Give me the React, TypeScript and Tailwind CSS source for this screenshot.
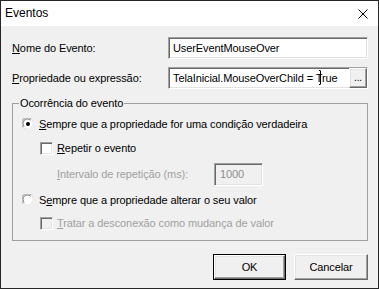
const sunken =
  'border border-t-[#a0a0a0] border-l-[#a0a0a0] border-r-white border-b-white shadow-[inset_1px_1px_0_#696969,inset_-1px_-1px_0_#e3e3e3]'
const raised =
  'border border-t-white border-l-white border-r-[#696969] border-b-[#696969] shadow-[inset_-1px_-1px_0_#a0a0a0,inset_1px_1px_0_#e3e3e3]'

function Radio({ checked }: { checked?: boolean }) {
  return (
    <svg width="12" height="12" viewBox="0 0 12 12" className="shrink-0">
      <circle cx="6" cy="6" r="5.5" fill="#fff" />
      <path d="M1.1 9.5A5.5 5.5 0 0 1 9.5 1.1" fill="none" stroke="#a0a0a0" strokeWidth="1" />
      <path d="M9.5 1.1A5.5 5.5 0 0 1 1.1 9.5" fill="none" stroke="#e3e3e3" strokeWidth="1" />
      <path d="M2.2 8.6A4.5 4.5 0 0 1 8.6 2.2" fill="none" stroke="#696969" strokeWidth="1" />
      {checked && <circle cx="6" cy="6" r="2" fill="#000" />}
    </svg>
  )
}

function Check({ disabled }: { disabled?: boolean }) {
  return <div className={`w-[13px] h-[13px] shrink-0 ${sunken} ${disabled ? 'bg-[#f0f0f0]' : 'bg-white'}`} />
}

export default function App() {
  return (
    <div className="w-[379px] h-[289px] border border-[#262626] bg-[#f0f0f0] flex flex-col font-['Liberation_Sans',Arial,sans-serif] text-[11px] leading-[13px] tracking-[-0.1px] text-black select-none">
      {/* title bar */}
      <div className="h-[25px] shrink-0 bg-white flex items-center justify-between pl-[4px] pr-[10px]">
        <span className="text-[12px] tracking-normal">Eventos</span>
        <svg width="10" height="10" viewBox="0 0 10 10">
          <path d="M0.5 0.5L9.5 9.5M9.5 0.5L0.5 9.5" stroke="#000" strokeWidth="1" />
        </svg>
      </div>

      <div className="flex-1 flex flex-col pl-[11px] pr-[10px] pt-[11px]">
        <div className="flex items-center h-[22px]">
          <span className="flex-1">
            <u>N</u>ome do Evento:
          </span>
          <div className={`w-[200px] h-[22px] bg-white pl-[4px] flex items-center ${sunken}`}>UserEventMouseOver</div>
        </div>

        <div className="flex items-center h-[22px] mt-[8px]">
          <span className="flex-1">
            <u>P</u>ropriedade ou expressão:
          </span>
          <div className={`relative w-[200px] h-[22px] bg-white pl-[4px] flex items-center ${sunken}`}>
            <span className="flex-1">TelaInicial.MouseOverChild = True</span>
            <div
              className={`w-[18px] h-[20px] bg-[#f0f0f0] flex items-end justify-center pb-[4px] text-[10px] leading-[10px] ${raised}`}
            >
              ...
            </div>
            {/* mouse I-beam */}
            <svg width="4" height="15" viewBox="0 0 4 15" className="absolute left-[150px] top-[2px]">
              <path d="M1.5 0.5V14.5M0 0.5H1M0 14.5H1" fill="none" stroke="#000" strokeWidth="1" />
            </svg>
          </div>
        </div>

        <fieldset className="mt-[8px] border border-[#a0a0a0] px-[9px] pt-[4px] pb-[7px] min-w-0">
          <legend className="-ml-[3px] px-[1px] leading-[13px]">Ocorrência do evento</legend>

          <div className="flex items-center h-[20px] gap-[5px]">
            <Radio checked />
            <span>
              <u>S</u>empre que a propriedade for uma condição verdadeira
            </span>
          </div>

          <div className="flex items-center h-[20px] mt-[4px] pl-[18px] gap-[4px]">
            <Check />
            <span>
              <u>R</u>epetir o evento
            </span>
          </div>

          <div className="flex items-center h-[23px] mt-[5px] pl-[35px]">
            <span className="w-[157px] text-[#a0a0a0]">
              <u>I</u>ntervalo de repetição (ms):
            </span>
            <div className={`w-[49px] h-[23px] bg-[#f0f0f0] pl-[5px] flex items-center text-[#8c8c8c] ${sunken}`}>1000</div>
          </div>

          <div className="flex items-center h-[20px] mt-[4px] gap-[5px]">
            <Radio />
            <span>
              S<u>e</u>mpre que a propriedade alterar o seu valor
            </span>
          </div>

          <div className="flex items-center h-[20px] mt-[3px] pl-[18px] gap-[4px]">
            <Check disabled />
            <span className="text-[#a0a0a0]">
              <u>T</u>ratar a desconexão como mudança de valor
            </span>
          </div>
        </fieldset>

        <div className="flex justify-end gap-[8px] mt-[13px]">
          <button className="w-[73px] h-[26px] border border-black bg-[#f0f0f0] p-0">
            <div className={`w-full h-full flex items-center justify-center ${raised}`}>OK</div>
          </button>
          <button className={`w-[74px] h-[26px] bg-[#f0f0f0] flex items-center justify-center ${raised}`}>Cancelar</button>
        </div>
      </div>
    </div>
  )
}
